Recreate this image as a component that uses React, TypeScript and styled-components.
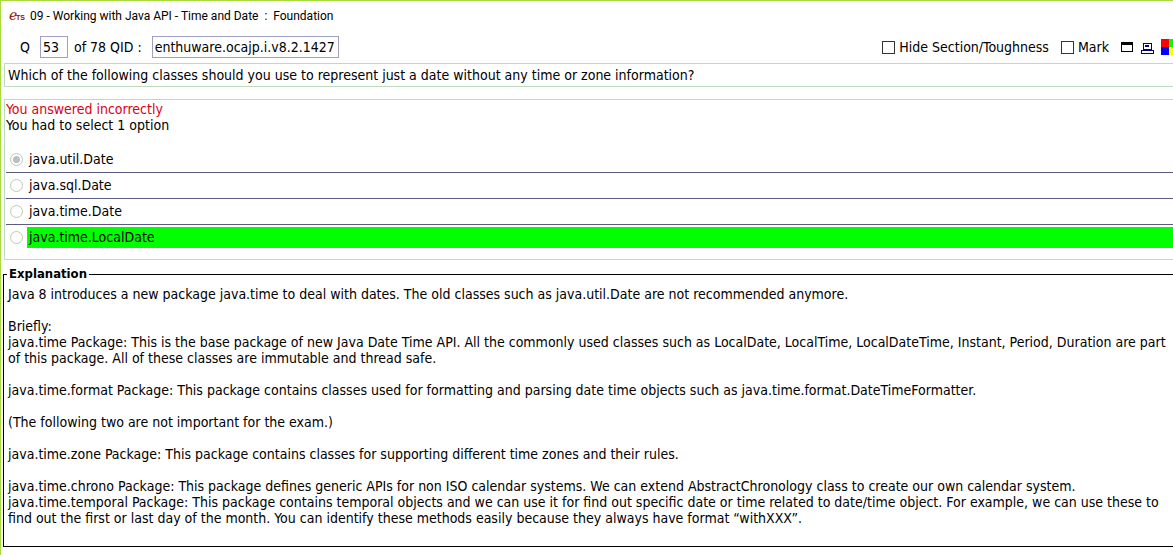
import React from "react";
import styled, { createGlobalStyle } from "styled-components";

const GlobalStyle = createGlobalStyle`
  *, *::before, *::after { box-sizing: border-box; }
  body {
    margin: 0;
    overflow-x: hidden;
    background: #fff;
    color: #000;
    font: 14px/16px Verdana, "DejaVu Sans Condensed", sans-serif;
  }
`;

const Window = styled.main`
  min-height: 100vh;
  border-top: 1px solid #a6dc3c;
  border-left: 1px solid #a6dc3c;
`;

const TitleBar = styled.header`
  display: flex;
  align-items: center;
  gap: 5px;
  height: 30px;
  padding-left: 8px;
`;

const Title = styled.h1`
  margin: 0;
  font: 12px/16px "Segoe UI", Roboto, sans-serif;
  white-space: pre;
`;

const Toolbar = styled.div`
  display: flex;
  align-items: center;
  height: 32px;
  padding-left: 19px;
`;

const Locator = styled.div`
  display: flex;
  align-items: center;
  flex: 1;
  white-space: nowrap;
`;

const Field = styled.input<{ $width: number }>`
  width: ${(p) => p.$width}px;
  height: 22px;
  margin: 0 6px 0 10px;
  padding: 0 1px 0 2px;
  border: 1px solid #a0a0c4;
  border-radius: 0;
  background: #fff;
  color: #000;
  font: inherit;
`;

const Check = styled.label`
  display: flex;
  align-items: center;
  gap: 4px;
  margin-right: 12px;
  white-space: nowrap;
`;

const CheckBox = styled.input`
  appearance: none;
  width: 13px;
  height: 13px;
  margin: 0;
  border: 1px solid #333;
  background: #fff;
  &:checked { background: #333; }
`;

const IconButton = styled.button<{ $width: number; $gap: number }>`
  display: block;
  width: ${(p) => p.$width}px;
  height: 16px;
  margin: 0 ${(p) => p.$gap}px 0 0;
  padding: 0;
  border: 0;
  overflow: hidden;
  background: none;
  svg { display: block; }
`;

const Question = styled.p`
  margin: 0 0 12px 3px;
  padding: 3px;
  border: 1px solid #bcdcbc;
  border-right: 0;
`;

const Answers = styled.section`
  margin-left: 3px;
  padding: 1px 0 9px 1px;
  border: 1px solid #bcdcbc;
  border-right: 0;
`;

const Status = styled.p<{ $wrong?: boolean }>`
  margin: 0;
  color: ${(p) => (p.$wrong ? "#dc0014" : "#000")};
`;

const Options = styled.ul`
  margin: 14px 0 0;
  padding: 0;
  list-style: none;
`;

const Option = styled.li`
  display: flex;
  align-items: center;
  gap: 4px;
  padding: 2px 0 2px 4px;
  & + & { border-top: 1px solid #5c5c80; }
`;

const Radio = styled.input`
  appearance: none;
  flex: none;
  width: 13px;
  height: 13px;
  margin: 0;
  padding: 2px;
  border: 1px solid #b8ccb4;
  border-radius: 50%;
  &:checked { background: #bebebe content-box; }
`;

const OptionLabel = styled.label<{ $correct: boolean }>`
  flex: 1;
  padding: 2px 2px 3px;
  background: ${(p) => (p.$correct ? "#00ff00" : "transparent")};
`;

const Explanation = styled.fieldset`
  margin: 6px 0 0 2px;
  padding: 4px 3px 20px 4px;
  border: 1px solid #000;
  border-right: 0;
  p { margin: 0 0 16px; }
  p:last-child { margin: 0; }
`;

const Legend = styled.legend`
  margin-left: -1px;
  padding: 0 2px;
  font-weight: bold;
  font-size: 13px;
`;

const Logo = () => (
  <svg width="16" height="16" viewBox="0 0 16 16" fill="#8c1010" overflow="visible" aria-hidden="true">
    <text x="0" y="12" fontSize="14" fontFamily="DejaVu Sans, sans-serif">ℯ</text>
    <text x="7" y="12" fontSize="7" fontWeight="bold" fontFamily="Liberation Sans, sans-serif">TS</text>
  </svg>
);

const WindowIcon = () => (
  <svg width="12" height="16" shapeRendering="crispEdges" aria-hidden="true">
    <path d="M0 3h12v10H0zM1 6v6h10V6z" fillRule="evenodd" />
  </svg>
);

const PrintIcon = () => (
  <svg width="13" height="16" shapeRendering="crispEdges" fill="none" stroke="#000080" aria-hidden="true">
    <path d="M2.5 4.5h8v6h-8zM.5 11.5h12v3H.5zM4 6.5h4M4 7.5h4M2 11.5h9" />
  </svg>
);

const ColorsIcon = () => (
  <svg width="16" height="16" shapeRendering="crispEdges" aria-hidden="true">
    <path fill="#f00" d="M0 0h8v8H0z" />
    <path fill="#0f0" d="M8 0h8v8H8z" />
    <path fill="#00f" d="M0 8h8v8H0z" />
    <path fill="#ff0" d="M8 8h8v8H8z" />
  </svg>
);

const options = [
  { text: "java.util.Date", chosen: true, correct: false },
  { text: "java.sql.Date", chosen: false, correct: false },
  { text: "java.time.Date", chosen: false, correct: false },
  { text: "java.time.LocalDate", chosen: false, correct: true },
];

export default function App() {
  return (
    <Window>
      <GlobalStyle />
      <TitleBar>
        <Logo />
        <Title>{"09 - Working with Java API - Time and Date  :  Foundation"}</Title>
      </TitleBar>
      <Toolbar>
        <Locator>
          <label htmlFor="number">Q</label>
          <Field id="number" $width={28} defaultValue="53" />
          <label htmlFor="qid">of 78 QID :</label>
          <Field id="qid" $width={187} defaultValue="enthuware.ocajp.i.v8.2.1427" />
        </Locator>
        <Check><CheckBox type="checkbox" />Hide Section/Toughness</Check>
        <Check><CheckBox type="checkbox" />Mark</Check>
        <IconButton $width={12} $gap={8} aria-label="Window"><WindowIcon /></IconButton>
        <IconButton $width={13} $gap={7} aria-label="Print"><PrintIcon /></IconButton>
        <IconButton $width={12} $gap={0} aria-label="Colors"><ColorsIcon /></IconButton>
      </Toolbar>
      <Question>
        Which of the following classes should you use to represent just a date without any time or zone information?
      </Question>
      <Answers>
        <Status $wrong>You answered incorrectly</Status>
        <Status>You had to select 1 option</Status>
        <Options>
          {options.map((o, i) => (
            <Option key={o.text}>
              <Radio type="radio" name="answer" id={`option-${i}`} defaultChecked={o.chosen} disabled />
              <OptionLabel htmlFor={`option-${i}`} $correct={o.correct}>{o.text}</OptionLabel>
            </Option>
          ))}
        </Options>
      </Answers>
      <Explanation>
        <Legend>Explanation</Legend>
        <p>
          Java 8 introduces a new package java.time to deal with dates. The old classes such as java.util.Date are not
          recommended anymore.
        </p>
        <p>
          Briefly:<br />
          java.time Package: This is the base package of new Java Date Time API. All the commonly used classes such as
          LocalDate, LocalTime, LocalDateTime, Instant, Period, Duration are part of this package. All of these classes
          are immutable and thread safe.
        </p>
        <p>
          java.time.format Package: This package contains classes used for formatting and parsing date time objects such
          as java.time.format.DateTimeFormatter.
        </p>
        <p>(The following two are not important for the exam.)</p>
        <p>java.time.zone Package: This package contains classes for supporting different time zones and their rules.</p>
        <p>
          java.time.chrono Package: This package defines generic APIs for non ISO calendar systems. We can extend
          AbstractChronology class to create our own calendar system.<br />
          java.time.temporal Package: This package contains temporal objects and we can use it for find out specific
          date or time related to date/time object. For example, we can use these to find out the first or last day of
          the month. You can identify these methods easily because they always have format “withXXX”.
        </p>
      </Explanation>
    </Window>
  );
}
